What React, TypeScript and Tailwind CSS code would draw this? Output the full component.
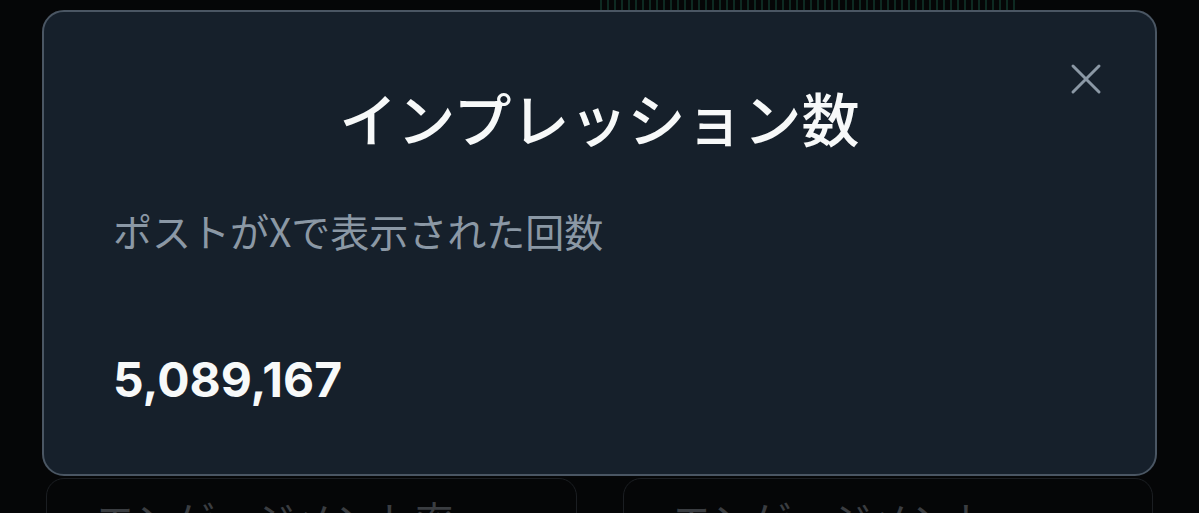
import { ChevronRight } from "lucide-react";

const jp = "font-['Noto_Sans_CJK_JP',sans-serif]";

export default function App() {
  return (
    <div className="relative h-[513px] w-[1199px] overflow-hidden bg-[#050607]">
      {/* Dimmed page behind the dialog */}
      <div className="grid grid-cols-2 gap-[46px] px-[46px] pt-[478px]">
        {["エンゲージメント率", "エンゲージメント"].map((label) => (
          <div
            key={label}
            className="flex h-[80px] items-start justify-between rounded-[18px] border border-[#1b1e22] px-[48px] pt-[20px]"
          >
            <span className={`${jp} text-[40px] leading-none text-[#3a3d41]`}>{label}</span>
            <ChevronRight className="mt-[12px] h-[28px] w-[28px] text-[#303337]" strokeWidth={2.5} />
          </div>
        ))}
      </div>

      {/* Faint chart bars peeking above the dialog */}
      <div className="absolute left-[600px] top-0 flex h-[10px] w-[480px] items-start gap-[5px]">
        {Array.from({ length: 60 }).map((_, i) => (
          <div key={i} className="h-[10px] w-[2px] bg-[#0e2a22]" />
        ))}
      </div>

      {/* Dialog */}
      <div className="absolute left-[42px] top-[10px] flex h-[466px] w-[1115px] flex-col rounded-[22px] border-2 border-[#4a5663] bg-[#16202b] px-[69px] pt-[70px]">
        <button className="absolute right-[52px] top-[50px] flex h-[34px] w-[34px] items-center justify-center text-[#8b98a5]">
          <svg viewBox="0 0 34 34" className="h-[34px] w-[34px]" fill="none" stroke="currentColor" strokeWidth="3" strokeLinecap="round">
            <path d="M4 4 L30 30 M30 4 L4 30" />
          </svg>
        </button>
        <h1 className={`${jp} text-center text-[58px] font-medium leading-[70px] text-[#f7f9f9]`}>
          インプレッション数
        </h1>
        <p className={`${jp} mt-[55px] text-[39px] leading-[47px] text-[#8b98a5]`}>
          ポストがXで表示された回数
        </p>
        <div className="mt-[97px] font-['Inter',sans-serif] text-[48px] font-bold leading-[58px] text-[#f7f9f9]">
          5,089,167
        </div>
      </div>
    </div>
  );
}
